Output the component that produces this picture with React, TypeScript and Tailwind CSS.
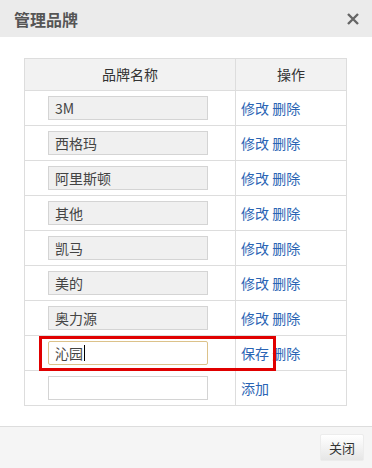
const brands = ['3M', '西格玛', '阿里斯顿', '其他', '凯马', '美的', '奥力源'];

const font = { fontFamily: '"Noto Sans CJK SC", "Microsoft YaHei", sans-serif' };

function LinkText({ children }: { children: React.ReactNode }) {
  return <span className="text-[#2a64b4] cursor-pointer">{children}</span>;
}

export default function App() {
  return (
    <div className="w-[372px] h-[468px] bg-white flex flex-col text-[#333]" style={font}>
      {/* header */}
      <div className="h-[37px] bg-[#ebebeb] flex items-center justify-between pl-[14px] pr-[12px]">
        <h1 className="text-[16px] font-bold text-[#555] leading-none">管理品牌</h1>
        <svg width="14" height="14" viewBox="0 0 14 14" className="mt-[1px]">
          <path d="M2 2 L12 12 M12 2 L2 12" stroke="#666" strokeWidth="2.4" strokeLinecap="butt" />
        </svg>
      </div>

      {/* body */}
      <div className="flex-1 pt-[21px] pl-[24px]">
        <div className="relative w-[322px]">
          <table className="w-[322px] border-collapse border border-[#ddd] table-fixed">
            <colgroup>
              <col className="w-[211px]" />
              <col className="w-[111px]" />
            </colgroup>
            <thead>
              <tr className="h-[32px] bg-[#f2f2f2]">
                <th className="border border-[#ddd] text-[14px] font-normal text-[#333]">品牌名称</th>
                <th className="border border-[#ddd] text-[14px] font-normal text-[#333]">操作</th>
              </tr>
            </thead>
            <tbody>
              {brands.map((b) => (
                <tr key={b} className="h-[35px]">
                  <td className="border border-[#ddd] pl-[23px]">
                    <div className="w-[160px] h-[24px] bg-[#f0f0f0] border border-[#d4d4d4] flex items-center pl-[6px] text-[14px] text-[#444] leading-none">
                      {b}
                    </div>
                  </td>
                  <td className="border border-[#ddd] pl-[5px] text-[14px]">
                    <LinkText>修改</LinkText> <LinkText>删除</LinkText>
                  </td>
                </tr>
              ))}
              <tr className="h-[35px]">
                <td className="border border-[#ddd] pl-[23px]">
                  <div className="w-[160px] h-[24px] bg-white border border-[#dcc28a] rounded-[2px] flex items-center pl-[6px] text-[14px] text-[#444] leading-none">
                    沁园
                    <span className="w-px h-[16px] bg-black ml-px" />
                  </div>
                </td>
                <td className="border border-[#ddd] pl-[5px] text-[14px]">
                  <LinkText>保存</LinkText> <LinkText>删除</LinkText>
                </td>
              </tr>
              <tr className="h-[35px]">
                <td className="border border-[#ddd] pl-[23px]">
                  <div className="w-[160px] h-[24px] bg-white border border-[#d4d4d4]" />
                </td>
                <td className="border border-[#ddd] pl-[5px] text-[14px]">
                  <LinkText>添加</LinkText>
                </td>
              </tr>
            </tbody>
          </table>
          {/* highlight */}
          <div className="absolute left-[15px] top-[278px] w-[237px] h-[35px] border-[3px] border-[#e00000] pointer-events-none" />
        </div>
      </div>

      {/* footer */}
      <div className="h-[42px] border-t border-[#ddd] bg-[#f5f5f5] flex items-center justify-end pr-[8px]">
        <button className="w-[44px] h-[27px] text-[13px] text-[#333] bg-gradient-to-b from-white to-[#e6e6e6] border border-[#ececec] rounded-[2px]">
          关闭
        </button>
      </div>
    </div>
  );
}
